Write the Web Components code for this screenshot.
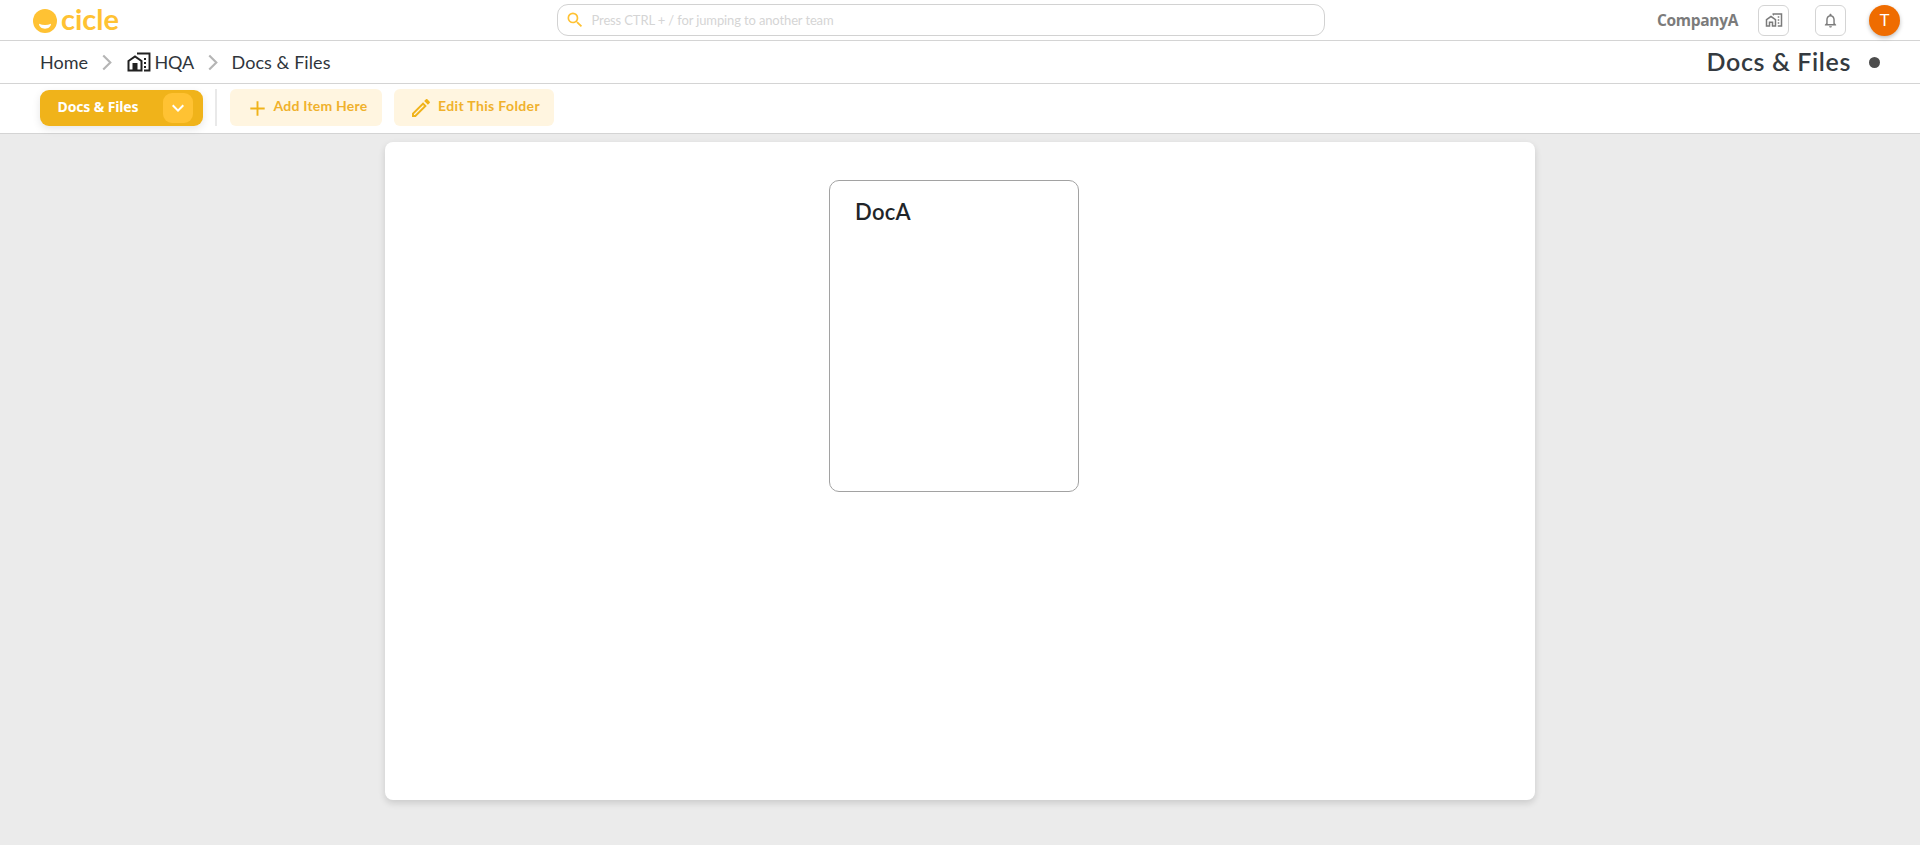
<!DOCTYPE html>
<html lang="en">
<head>
<meta charset="utf-8">
<title>Docs &amp; Files</title>
<style>
body{margin:0;background:#ebebeb;font-family:Lato,"Open Sans",sans-serif;color:#343a40}
</style>
</head>
<body>
<docs-app></docs-app>
<script>
const define = (name, html, init) => customElements.define(name, class extends HTMLElement {
  connectedCallback() {
    if (this.shadowRoot) return;
    const t = document.createElement('template');
    t.innerHTML = html;
    this.attachShadow({ mode: 'open' }).append(t.content.cloneNode(true));
    if (init) init(this);
  }
});

/* Label whose tracking is spread so that it fills the width given in its "w" attribute. */
define('fit-text', `<style>:host{display:block;white-space:pre;flex:none}span{display:inline-block}</style><span><slot></slot></span>`, el => {
  const w = +el.getAttribute('w'), s = el.shadowRoot.querySelector('span');
  const n = el.textContent.length;
  s.style.letterSpacing = ((w - s.getBoundingClientRect().width) / n) + 'px';
  el.style.width = w + 'px';
});

const ICONS = {
  houses: '<path d="M1 11v10h6v-5h2v5h6V11L8 6l-7 5zm12 8h-2v-5H5v5H3v-7l5-3.500 5 3.500v7zM17 7h2v2h-2zM17 11h2v2h-2zM17 15h2v2h-2zM10 3v1.970l2 1.430V5h9v14h-4v2h6V3z"/>',
  bell: '<path d="M12 22c1.100 0 2-.9 2-2h-4c0 1.100.9 2 2 2zm6-6v-5c0-3.070-1.630-5.640-4.500-6.320V4c0-.83-.67-1.500-1.500-1.500s-1.500.67-1.500 1.500v.68C7.640 5.360 6 7.920 6 11v5l-2 2v1h16v-1l-2-2zm-2 1H8v-6c0-2.480 1.510-4.500 4-4.500s4 2.020 4 4.500v6z"/>',
  search: '<path d="M15.500 14h-.79l-.28-.27A6.471 6.471 0 0 0 16 9.500 6.500 6.500 0 1 0 9.500 16c1.610 0 3.090-.59 4.230-1.570l.27.28v.79l5 4.990L20.490 19l-4.990-5zm-6 0C7.010 14 5 11.990 5 9.500S7.010 5 9.500 5 14 7.010 14 9.500 11.990 14 9.500 14z"/>',
  plus: '<path d="M19.500 13h-6.500v6.500h-2v-6.500H4.500v-2h6.500V4.500h2v6.500h6.500z"/>',
  pencil: '<path d="M14.060 9.020l.92.92L5.920 19H5v-.92l9.060-9.060M17.660 3c-.25 0-.51.1-.7.290l-1.830 1.830 3.750 3.750 1.830-1.830c.39-.39.39-1.020 0-1.410l-2.340-2.340c-.2-.2-.45-.29-.71-.29zm-3.600 3.190L3 17.250V21h3.750L17.810 9.940l-3.750-3.750z"/>',
  down: '<path d="M7.400 8.600L12 13.200l4.600-4.600L18 10l-6 6-6-6z"/>',
  right: '<path d="M6 2l10 10L6 22" fill="none" stroke="currentColor" stroke-width="3"/>'
};
define('ui-icon', `<style>:host{display:block;flex:none}svg{display:block;fill:currentColor}</style><svg viewBox="0 0 24 24"></svg>`, el => {
  const s = el.shadowRoot.querySelector('svg'), size = el.getAttribute('size');
  s.setAttribute('width', size); s.setAttribute('height', size);
  s.innerHTML = ICONS[el.getAttribute('name')];
});

define('brand-logo', `<style>
:host{display:flex;align-items:center;gap:4px;color:#ffc233;height:24px}
svg{display:block}
fit-text{font:700 29px/24px Lato,sans-serif;margin-top:-5px}
</style>
<svg width="24" height="24" viewBox="0 0 24 24"><circle cx="12" cy="12" r="12" fill="#ffc233"/><path d="M6 14.800q6 2.400 12 0c0 3-2.700 4.900-6 4.900s-6-1.900-6-4.900z" fill="#fff"/></svg>
<fit-text w="58">cicle</fit-text>`);

define('search-box', `<style>
:host{display:flex;align-items:center;box-sizing:border-box;width:768px;height:32px;border:1px solid #d2d2d2;border-radius:11px;padding-left:7px;color:#ffc233}
fit-text{font-size:13px;line-height:16px;color:#d5d5d5;margin:-1px 0 0 6.500px}
</style><ui-icon name="search" size="20"></ui-icon><fit-text w="242">Press CTRL + / for jumping to another team</fit-text>`);

define('icon-button', `<style>
:host{display:flex;align-items:center;justify-content:center;box-sizing:border-box;width:31px;height:31px;border:1px solid #d4d4d4;border-radius:6px;color:#7b7b7b}
</style><slot></slot>`);

define('user-avatar', `<style>
:host{display:flex;align-items:center;justify-content:center;width:31px;height:31px;border-radius:50%;background:#ef6c00;color:#fff;font:17px/31px Roboto,sans-serif;box-shadow:0 2px 4px rgba(0,0,0,.25)}
</style><slot></slot>`);

define('top-bar', `<style>
:host{display:grid;grid-template-columns:557px 768px 1fr;align-items:center;height:40px;background:#fff;border-bottom:1px solid #d4d4d4}
brand-logo{margin:2px 0 0 33px}
.r{display:flex;align-items:center;justify-content:flex-end;padding-right:20px}
.r fit-text{font:700 15.500px/20px "Open Sans",sans-serif;color:#7b7b7b;margin-right:20px}
.r icon-button+icon-button{margin:0 23px 0 26px}
</style>
<brand-logo></brand-logo><search-box></search-box>
<div class="r"><fit-text w="81">CompanyA</fit-text><icon-button><ui-icon name="houses" size="18"></ui-icon></icon-button><icon-button><ui-icon name="bell" size="17"></ui-icon></icon-button><user-avatar>T</user-avatar></div>`);

define('crumb-bar', `<style>
:host{display:flex;align-items:center;height:42px;padding:0 40px;background:#fff;border-bottom:1px solid #d4d4d4}
fit-text{font-size:18px;line-height:24px;color:#2f353b}
.c{color:#b5b5b5;margin:1px 10.500px 0 11px}
.c.last{margin-right:9.500px}
.h{display:flex;align-items:center;color:#212121}
svg{display:block;margin-right:4px}
.t{margin-left:auto;font-size:25px;line-height:30px;font-weight:600;color:#343a40;margin-top:-2px}
i{width:11px;height:11px;border-radius:50%;background:#4d4d4d;margin-left:18px}
</style>
<fit-text w="48">Home</fit-text><ui-icon class="c" name="right" size="17"></ui-icon>
<div class="h"><svg width="24" height="20" viewBox="0 0 24 20"><path d="M10 1.500h12.500v17H17" fill="none" stroke="#212121" stroke-width="1.900"/><path d="M1.500 9L8 4.500l6.500 4.500v9.500h-13z" fill="none" stroke="#212121" stroke-width="2"/><path d="M5.500 11h5v8h-5zM17 6h2v2h-2zM17 10h2v2h-2zM17 14h2v2h-2z" fill="#212121"/></svg><fit-text w="39.500">HQA</fit-text></div>
<ui-icon class="c last" name="right" size="17"></ui-icon><fit-text w="99">Docs &amp; Files</fit-text>
<fit-text class="t" w="144.500">Docs &amp; Files</fit-text><i></i>`);

define('split-button', `<style>
:host{display:flex;align-items:center;justify-content:space-between;box-sizing:border-box;width:163px;height:36px;padding:0 10px 0 17.500px;border-radius:9px;background:#f0b31a;color:#fff;box-shadow:0 3px 8px rgba(0,0,0,.1)}
fit-text{font:700 14px/18px "Noto Sans",sans-serif;margin-top:-2px}
div{display:flex;align-items:center;justify-content:center;width:30px;height:30px;border-radius:9px;background:#ffc233}
</style><fit-text w="81">Docs &amp; Files</fit-text><div><ui-icon name="down" size="24"></ui-icon></div>`);

define('soft-button', `<style>
:host{display:flex;align-items:center;box-sizing:border-box;height:37px;border-radius:6px;background:#fff5e0;color:#f0b12c;font-weight:700;font-size:14px;line-height:18px}
::slotted(fit-text){margin-top:-3px}
::slotted(ui-icon){color:#f0b31a;margin-top:1px}
</style><slot></slot>`);

define('tool-bar', `<style>
:host{display:flex;align-items:flex-start;box-sizing:border-box;height:50px;padding:5px 40px 0;background:#fff;border-bottom:1px solid #d4d4d4}
split-button{margin-top:1px}
hr{margin:0 13px 0 12px;border:0;width:2px;height:37px;background:#e9e9e9}
.a{width:152px;padding-left:16px;margin-right:12px}.a fit-text{margin-left:4.500px}
.e{width:160px;padding-left:15px}.e fit-text{margin-left:5px}
</style>
<split-button></split-button><hr>
<soft-button class="a"><ui-icon name="plus" size="23"></ui-icon><fit-text w="94">Add Item Here</fit-text></soft-button>
<soft-button class="e"><ui-icon name="pencil" size="24"></ui-icon><fit-text w="102">Edit This Folder</fit-text></soft-button>`);

define('doc-card', `<style>
:host{display:block;box-sizing:border-box;width:250px;height:312px;border:1px solid #a2a2a2;border-radius:10px;padding:17px 25px;background:#fff}
::slotted(fit-text){font-size:22px;line-height:28px;font-weight:600;color:#212529}
</style><slot></slot>`);

define('file-panel', `<style>
:host{display:block;box-sizing:border-box;width:1150px;height:658px;margin:8px auto 0;padding:38px 0 0 444px;background:#fff;border-radius:8px;box-shadow:0 3px 7px rgba(0,0,0,.14)}
</style><slot></slot>`);

define('docs-app', `<style>:host{display:block;height:845px;overflow:hidden;background:#ebebeb}</style>
<top-bar></top-bar><crumb-bar></crumb-bar><tool-bar></tool-bar>
<file-panel><doc-card><fit-text w="56">DocA</fit-text></doc-card></file-panel>`);
</script>
</body>
</html>
